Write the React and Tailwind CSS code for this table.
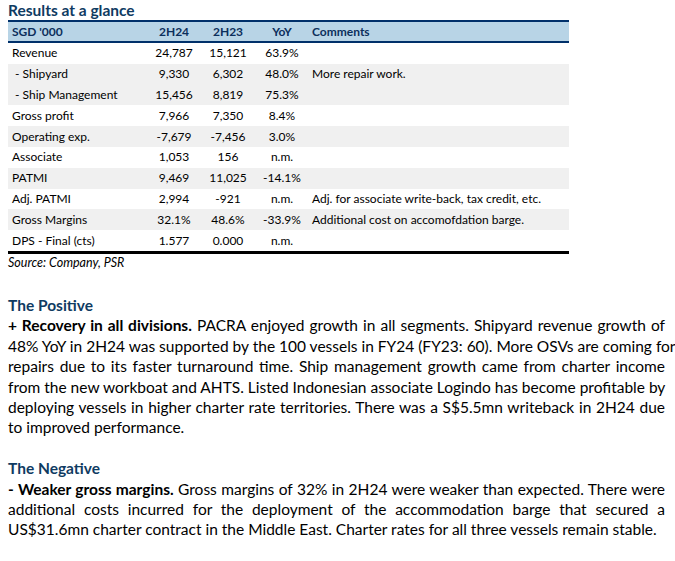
import React from 'react';

const rows = [
  { label: 'Revenue', a: '24,787', b: '15,121', y: '63.9%', c: '', grey: false },
  { label: ' - Shipyard', a: '9,330', b: '6,302', y: '48.0%', c: 'More repair work.', grey: true },
  { label: ' - Ship Management', a: '15,456', b: '8,819', y: '75.3%', c: '', grey: true },
  { label: 'Gross profit', a: '7,966', b: '7,350', y: '8.4%', c: '', grey: false },
  { label: 'Operating exp.', a: '-7,679', b: '-7,456', y: '3.0%', c: '', grey: true },
  { label: 'Associate', a: '1,053', b: '156', y: 'n.m.', c: '', grey: false },
  { label: 'PATMI', a: '9,469', b: '11,025', y: '-14.1%', c: '', grey: true },
  { label: 'Adj. PATMI', a: '2,994', b: '-921', y: 'n.m.', c: 'Adj. for associate write-back, tax credit, etc.', grey: false },
  { label: 'Gross Margins', a: '32.1%', b: '48.6%', y: '-33.9%', c: 'Additional cost on accomofdation barge.', grey: true },
  { label: 'DPS - Final (cts)', a: '1.577', b: '0.000', y: 'n.m.', c: '', grey: false },
];

const positive = [
  <><b>+ Recovery in all divisions.</b> PACRA enjoyed growth in all segments. Shipyard revenue growth of</>,
  '48% YoY in 2H24 was supported by the 100 vessels in FY24 (FY23: 60). More OSVs are coming for',
  'repairs due to its faster turnaround time. Ship management growth came from charter income',
  'from the new workboat and AHTS. Listed Indonesian associate Logindo has become profitable by',
  'deploying vessels in higher charter rate territories. There was a S$5.5mn writeback in 2H24 due',
];

const negative = [
  <><b>- Weaker gross margins.</b> Gross margins of 32% in 2H24 were weaker than expected. There were</>,
  'additional costs incurred for the deployment of the accommodation barge that secured a',
];

// each printed line is its own block so the wrap points match the source
function Line({ children, last }) {
  return (
    <div className={last ? 'whitespace-nowrap' : 'text-justify [text-align-last:justify] whitespace-nowrap'}>
      {children}
    </div>
  );
}

export default function App() {
  return (
    <div className="w-[675px] h-[561px] bg-white px-2 text-black font-['Lato','Liberation_Sans',sans-serif]">
      <div className="h-[20px] pt-[1px] text-[15.5px] leading-[19px] font-bold text-[#0f3b62]">Results at a glance</div>

      <div className="w-[561px] text-[12px]">
        <div className="flex h-[23px] items-center border-y-2 border-[#00306a] bg-[#b8d4e6] font-bold text-[#0c2f5c]">
          <div className="w-[139px] pl-1">SGD '000</div>
          <div className="w-[54px] text-center">2H24</div>
          <div className="w-[54px] text-center">2H23</div>
          <div className="w-[54px] text-center">YoY</div>
          <div className="flex-1 pl-[3px]">Comments</div>
        </div>
        {rows.map((r) => (
          <div key={r.label} className={`flex h-[20.8px] items-center ${r.grey ? 'bg-[#f0f0f0]' : 'bg-white'}`}>
            <div className="w-[139px] pl-1 whitespace-pre">{r.label}</div>
            <div className="w-[54px] text-center">{r.a}</div>
            <div className="w-[54px] text-center">{r.b}</div>
            <div className="w-[54px] text-center">{r.y}</div>
            <div className="flex-1 pl-[3px] whitespace-nowrap">{r.c}</div>
          </div>
        ))}
        <div className="h-[3px] bg-black" />
      </div>
      <div className="h-[18px] text-[12.5px] leading-[18px] italic">Source: Company, PSR</div>

      <div className="mt-[23px] w-[657px] text-[15.5px] leading-[20.4px]">
        <div className="font-bold text-[#0f3b62]">The Positive</div>
        {positive.map((l, i) => (
          <Line key={i}>{l}</Line>
        ))}
        <Line last>to improved performance.</Line>

        <div className="mt-[20.4px] font-bold text-[#0f3b62]">The Negative</div>
        {negative.map((l, i) => (
          <Line key={i}>{l}</Line>
        ))}
        <Line last>US$31.6mn charter contract in the Middle East. Charter rates for all three vessels remain stable.</Line>
      </div>
    </div>
  );
}
